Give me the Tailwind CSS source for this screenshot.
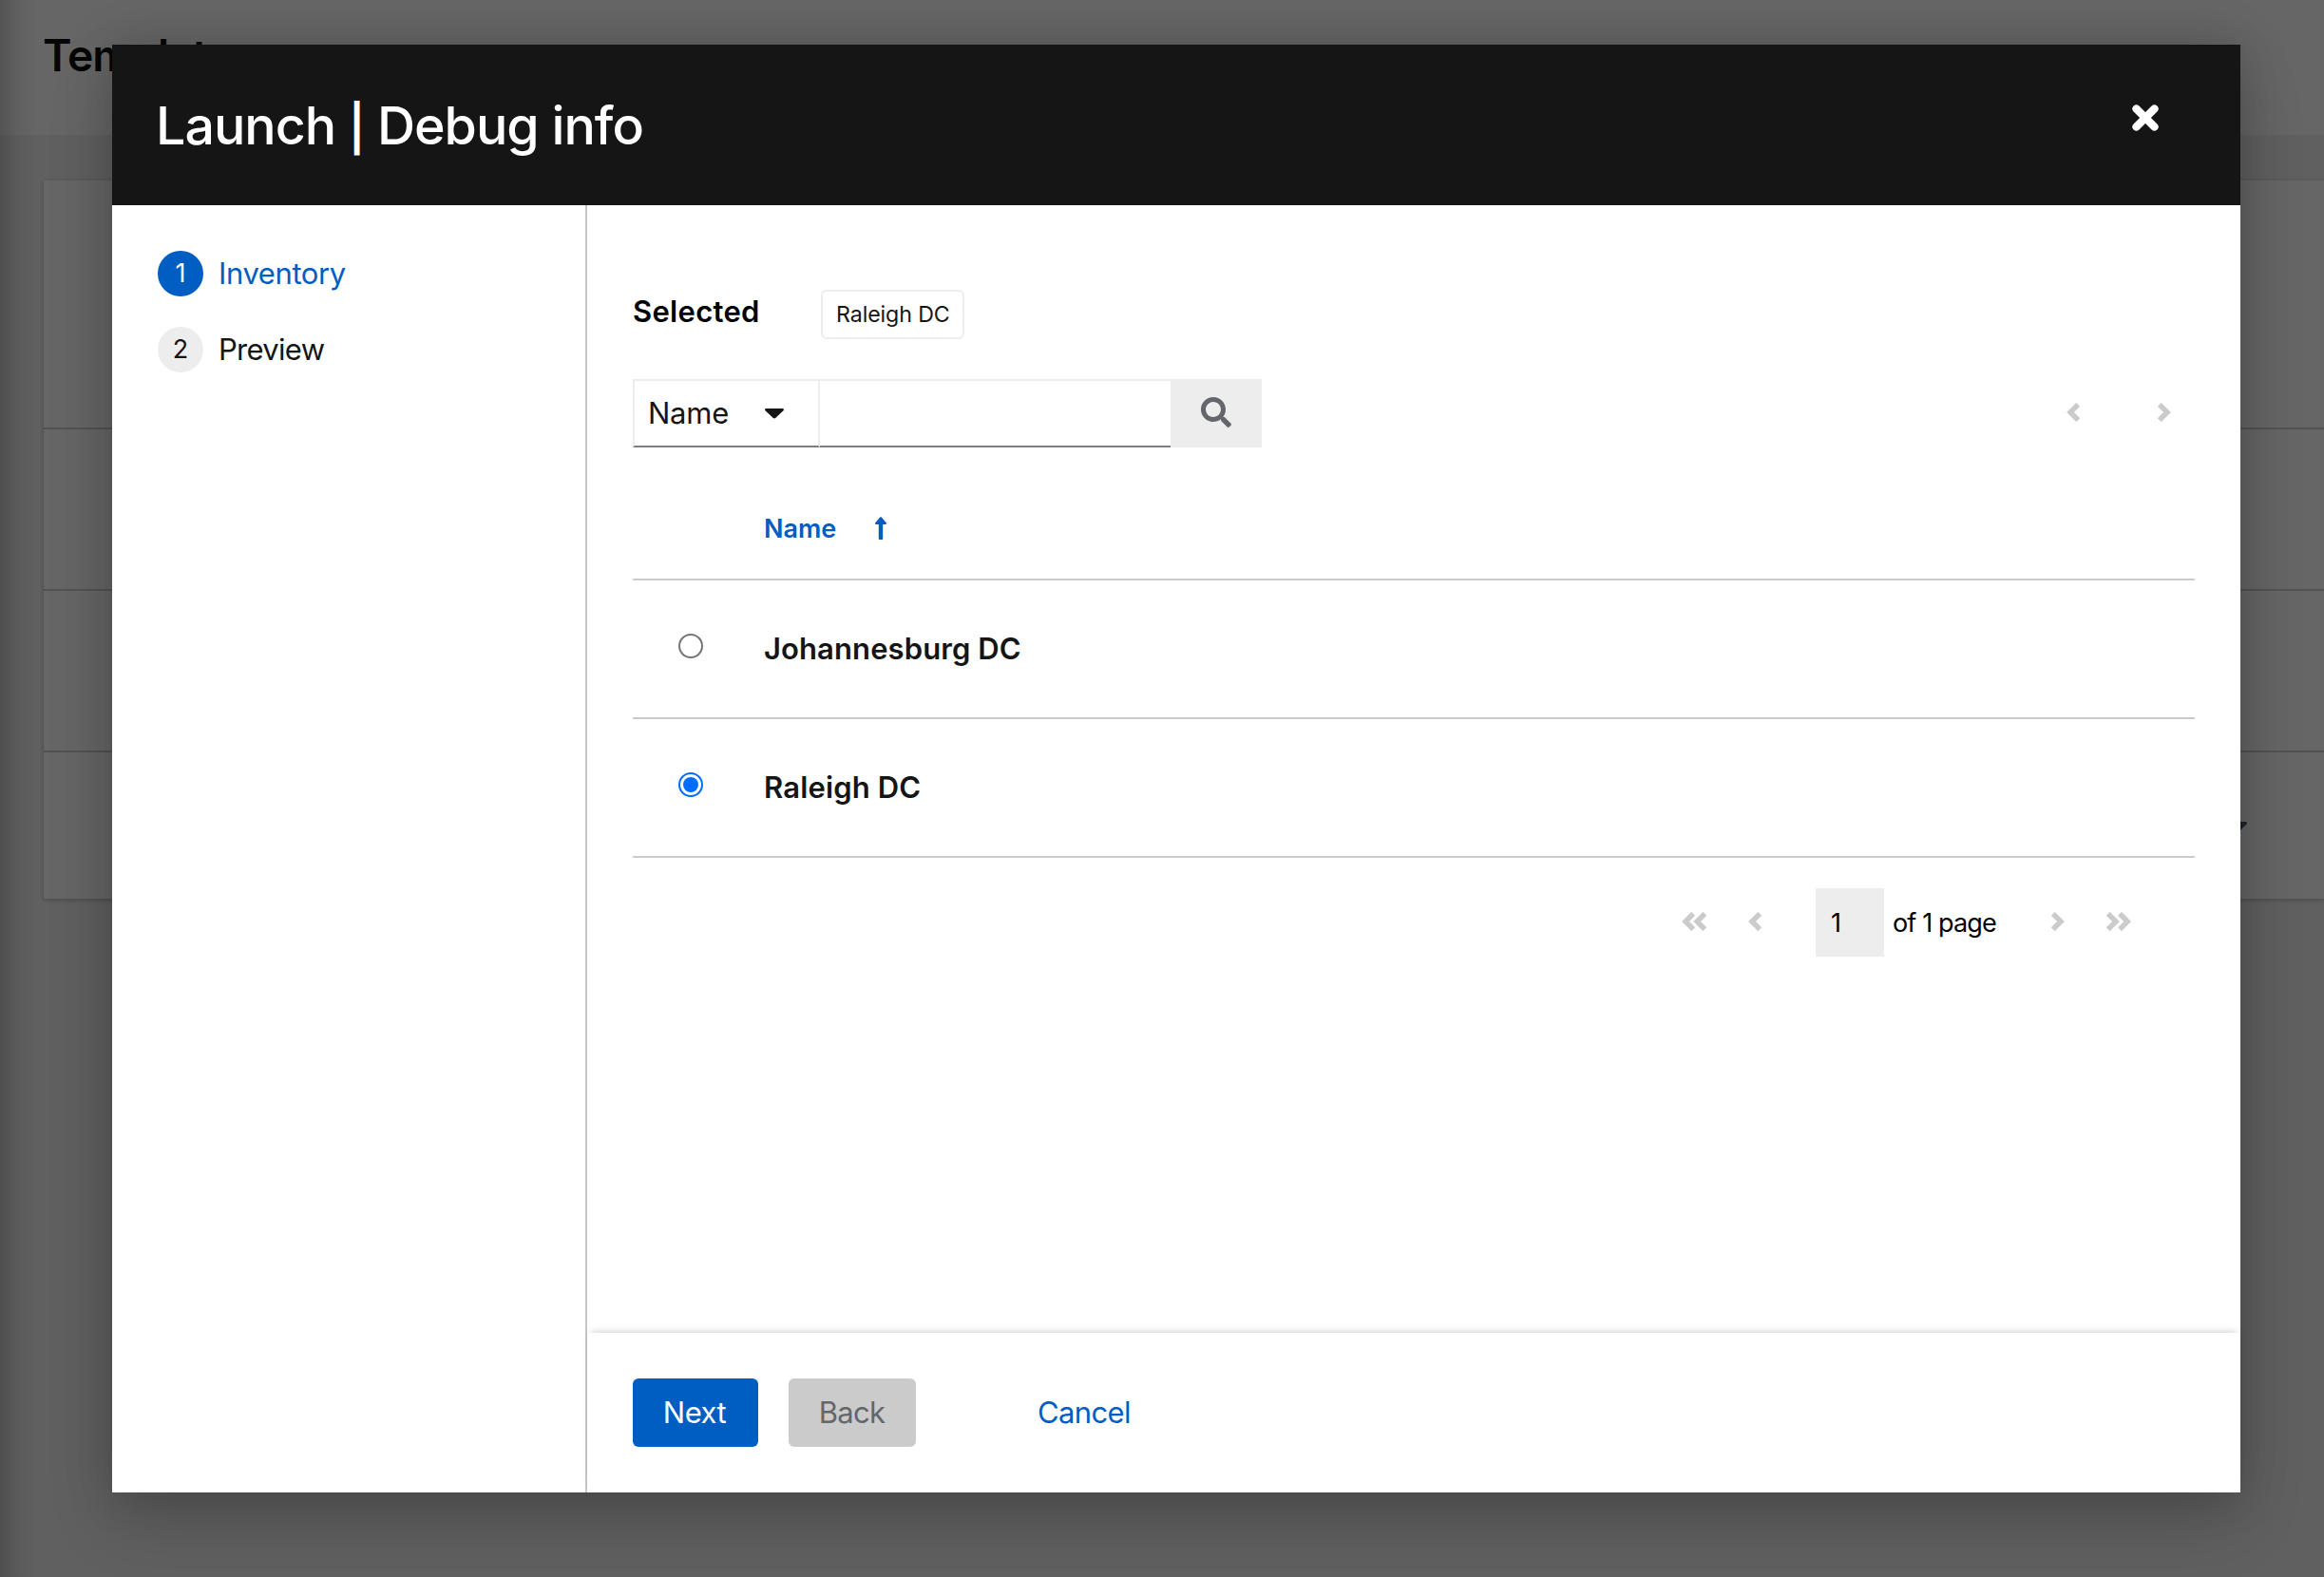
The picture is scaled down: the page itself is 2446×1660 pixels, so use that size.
<!DOCTYPE html>
<html lang="en">
<head>
<meta charset="utf-8">
<title>Templates</title>
<script src="https://cdn.jsdelivr.net/npm/@tailwindcss/browser@4"></script>
</head>
<body class="h-[1660px] w-[2446px] overflow-hidden bg-[#606060] font-['Inter',sans-serif] text-[31px] leading-[48px] text-[#151515]">

  <!-- Dimmed page behind the dialog -->
  <div class="relative h-[1660px]">
    <header class="h-[142px] bg-[#666666] pt-[34px] pl-[45px]">
      <h1 class="text-[46.3px] leading-[48px] font-semibold tracking-[-1px] text-[#060606]">Templates</h1>
    </header>
    <main class="pt-12 pl-[46px]">
      <section class="h-[756px] bg-[#666666] shadow-[0_2px_4px_rgba(0,0,0,0.15),0_0_4px_rgba(0,0,0,0.1)]">
        <div class="h-[262px] border-b-2 border-[#525252]"></div>
        <div class="h-[170px] border-b-2 border-[#525252]"></div>
        <div class="h-[170px] border-b-2 border-[#525252]"></div>
        <div class="flex justify-end pt-[73px] pr-[81px]">
          <svg class="h-3 w-5" viewBox="0 0 20 12" fill="#212427"><path d="M1.500 0h17c1.300 0 2 1.500 1 2.500l-8.300 8.300c-.7.7-1.700.7-2.400 0L.5 2.500C-.5 1.500.2 0 1.500 0z"/></svg>
        </div>
      </section>
    </main>
    <div class="absolute inset-y-0 left-0 w-[38px] bg-linear-to-r from-black/18 via-black/6 to-black/0"></div>
  </div>

  <!-- Launch wizard -->
  <div class="absolute top-[47px] left-[118px] flex h-[1524px] w-[2240px] flex-col bg-white shadow-[0_32px_64px_rgba(3,3,3,0.16),0_0_48px_rgba(3,3,3,0.18)]">
    <header class="flex h-[169px] shrink-0 justify-between bg-[#151515] pt-12 pr-[86px] pl-[46px] text-white">
      <h2 class="text-[55.500px] leading-[73px] font-medium tracking-[-1px]">Launch <span class="text-[48px] font-semibold">|</span> Debug info</h2>
      <button class="mt-[15px] h-7 w-7" aria-label="Close">
        <svg class="h-7 w-7" viewBox="0 0 28 28" fill="none" stroke="#fff" stroke-width="8.200" stroke-linecap="round"><path d="M4.500 4.500l19 19M23.500 4.500l-19 19"/></svg>
      </button>
    </header>

    <div class="flex min-h-0 flex-1">
      <nav class="flex w-[500px] shrink-0 flex-col gap-8 border-r-2 border-[#c7c7c7] pt-12 pl-12">
        <div class="flex h-12 items-center gap-4">
          <span class="flex h-12 w-12 items-center justify-center rounded-full bg-[#005dc1] text-[27px] text-white">1</span>
          <span class="tracking-[-0.4px] text-[#005dc1]">Inventory</span>
        </div>
        <div class="flex h-12 items-center gap-4">
          <span class="flex h-12 w-12 items-center justify-center rounded-full bg-[#ededed] text-[27px]">2</span>
          <span class="tracking-[-0.7px]">Preview</span>
        </div>
      </nav>

      <div class="flex flex-1 flex-col">
        <div class="flex-1 px-12">
          <div class="flex pt-[89px]">
            <span class="-mt-[1px] w-[198px] text-[31px] font-semibold tracking-[0.3px] text-black">Selected</span>
            <span class="flex h-[52px] w-[151px] items-center rounded-md border-2 border-[#ededed] pl-[14px] text-[23.200px] tracking-[-0.1px] whitespace-nowrap">Raleigh DC</span>
          </div>

          <div class="mt-[42px] flex h-[72px]">
            <button class="flex w-[197px] items-center border-2 border-[#ededed] border-b-[#7b7f84] pl-[14px]">
              <span class="w-[123px] text-left tracking-[-0.25px]">Name</span>
              <svg class="h-[11px] w-5" viewBox="0 0 20 12" preserveAspectRatio="none" fill="#151515"><path d="M1.500 0h17c1.300 0 2 1.500 1 2.500l-8.300 8.300c-.7.7-1.700.7-2.400 0L.5 2.500C-.5 1.500.2 0 1.500 0z"/></svg>
            </button>
            <input class="w-[369px] border-t-2 border-b-2 border-t-[#ededed] border-b-[#7b7f84] bg-white" aria-label="Search">
            <button class="flex w-24 items-center justify-center bg-[#ededed] pb-[2px]" aria-label="Search">
              <svg class="h-8 w-8" viewBox="0 0 512 512" fill="#63666b"><path d="M505 442.700L405.300 343c-4.500-4.500-10.600-7-17-7H372c27.600-35.300 44-79.700 44-128C416 93.100 322.900 0 208 0S0 93.100 0 208s93.100 208 208 208c48.300 0 92.700-16.400 128-44v16.300c0 6.400 2.500 12.500 7 17l99.700 99.700c9.400 9.400 24.600 9.400 33.900 0l28.300-28.300c9.400-9.400 9.400-24.600.1-34zM208 336c-70.700 0-128-57.200-128-128 0-70.700 57.200-128 128-128 70.700 0 128 57.200 128 128 0 70.700-57.200 128-128 128z"/></svg>
            </button>
            <div class="ml-auto flex items-center gap-[82px] pr-[25px] pb-[2px]">
              <svg class="h-5 w-[14px]" viewBox="0 0 14 20" fill="none" stroke="#cbcbcb" stroke-width="5.500"><path d="M12.200 1.800L4 10l8.200 8.200"/></svg>
              <svg class="h-5 w-[14px]" viewBox="0 0 14 20" fill="none" stroke="#cbcbcb" stroke-width="5.500"><path d="M1.800 1.800L10 10l-8.200 8.200"/></svg>
            </div>
          </div>

          <div class="mt-[31px] flex h-[109px] items-center border-b-2 border-[#cbcbcb] pl-[138px] text-[27px] font-semibold text-[#005dc1]">
            <span class="mt-[2px] w-[117px]">Name</span>
            <svg class="h-6 w-3" viewBox="0 0 12 24" fill="#005dc1"><path d="M8.200 8v15.200c0 .5-.3.800-.8.800H4.600c-.5 0-.8-.3-.8-.8V8H1C.1 8-.4 6.900.3 6.200L5.200.5c.4-.5 1.200-.5 1.600 0l4.900 5.700c.7.7.2 1.800-.7 1.800z"/></svg>
          </div>
          <div class="flex h-[146px] items-center border-b-2 border-[#cbcbcb] pl-12">
            <span class="-mt-[6px] h-[26px] w-[26px] rounded-full border-2 border-[#757575]"></span>
            <span class="ml-[64px] font-semibold tracking-[0.1px]">Johannesburg DC</span>
          </div>
          <div class="flex h-[146px] items-center border-b-2 border-[#cbcbcb] pl-12">
            <span class="-mt-[6px] flex h-[26px] w-[26px] items-center justify-center rounded-full border-2 border-[#006dff]"><span class="h-4 w-4 rounded-full bg-[#006dff]"></span></span>
            <span class="ml-[64px] font-semibold tracking-[0.15px]">Raleigh DC</span>
          </div>

          <div class="mt-8 flex h-[72px] items-center justify-end pr-[67px] text-[27px] text-black">
            <svg class="-mt-[2px] h-5 w-[26px]" viewBox="0 0 26 20" fill="none" stroke="#cbcbcb" stroke-width="5.500"><path d="M12.200 1.800L4 10l8.200 8.200M24.400 1.800L16.200 10l8.200 8.200"/></svg>
            <svg class="-mt-[2px] ml-[44px] h-5 w-[14px]" viewBox="0 0 14 20" fill="none" stroke="#cbcbcb" stroke-width="5.500"><path d="M12.200 1.800L4 10l8.200 8.200"/></svg>
            <span class="ml-[57px] flex h-[72px] w-[72px] items-center bg-[#ededed] pt-[2px] pl-4">1</span>
            <span class="mt-[2px] ml-[9px] w-[109px] tracking-[-0.85px] whitespace-nowrap">of 1 page</span>
            <svg class="-mt-[2px] ml-[58px] h-5 w-[14px]" viewBox="0 0 14 20" fill="none" stroke="#cbcbcb" stroke-width="5.500"><path d="M1.800 1.800L10 10l-8.200 8.200"/></svg>
            <svg class="-mt-[2px] ml-[44px] h-5 w-[26px]" viewBox="0 0 26 20" fill="none" stroke="#cbcbcb" stroke-width="5.500"><path d="M1.800 1.800L10 10l-8.200 8.200M14 1.800l8.200 8.200-8.200 8.200"/></svg>
          </div>
        </div>

        <footer class="flex h-[168px] shrink-0 items-center bg-white px-12 shadow-[0_-4px_8px_-4px_rgba(3,3,3,0.24)]">
          <button class="h-[72px] w-[132px] rounded-md bg-[#005dc1] pr-[2px] tracking-[-0.5px] text-white">Next</button>
          <button class="ml-8 h-[72px] w-[134px] rounded-md bg-[#cbcbcb] pr-[1px] tracking-[-0.75px] text-[#63666b]">Back</button>
          <button class="ml-32 tracking-[-0.65px] text-[#005dc1]">Cancel</button>
        </footer>
      </div>
    </div>
  </div>
</body>
</html>
